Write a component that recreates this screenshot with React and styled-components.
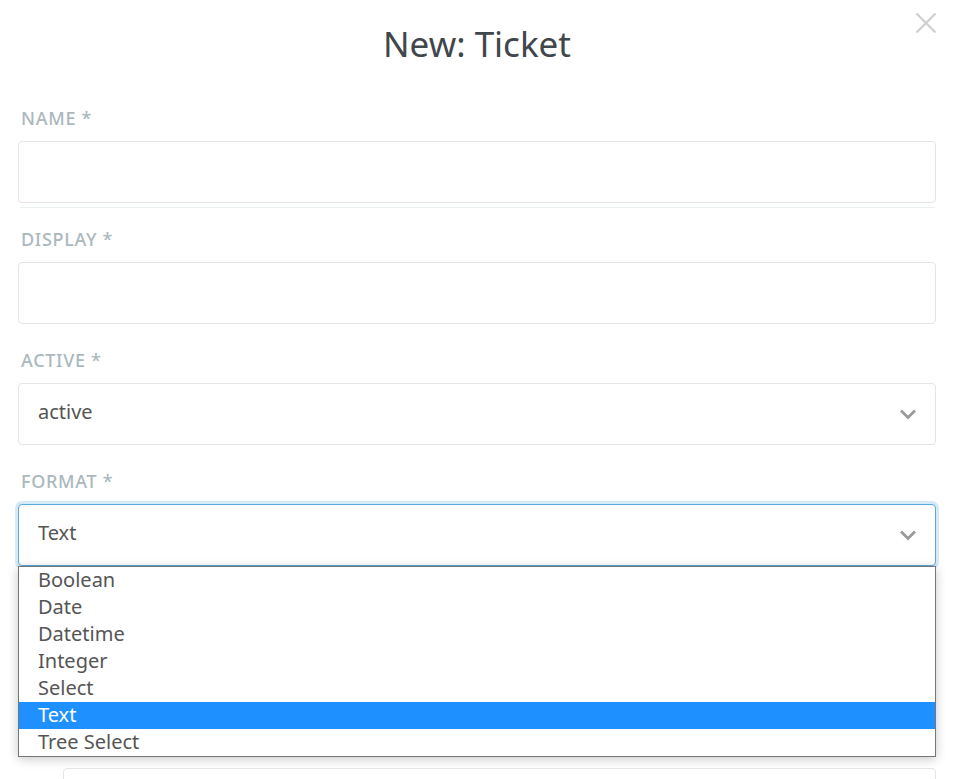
import React from "react";
import styled, { createGlobalStyle } from "styled-components";

const Global = createGlobalStyle`
  html, body { margin: 0; padding: 0; background: #fff; }
  body { font-family: "Noto Sans", "Open Sans", sans-serif; color: #585858; overflow: hidden; }
  * { box-sizing: border-box; }
`;

const Modal = styled.div`
  position: relative;
  width: 956px;
  height: 779px;
  overflow: hidden;
  padding: 0 20px 0 18px;
`;

const Header = styled.header`
  padding-top: 22px;
  text-align: center;
`;

const Title = styled.h1`
  margin: 0;
  font-size: 35px;
  line-height: 43px;
  font-weight: 400;
  color: #3f464c;
`;

const CloseButton = styled.button`
  position: absolute;
  top: 10px;
  right: 17px;
  width: 26px;
  height: 26px;
  padding: 0;
  border: 0;
  background: none;
  display: flex;
  align-items: center;
  justify-content: center;
`;

const Form = styled.form`
  margin-top: 41px;
  display: flex;
  flex-direction: column;
  gap: 24px;
`;

const Field = styled.div`
  display: flex;
  flex-direction: column;
`;

const Label = styled.label`
  display: block;
  padding-left: 3px;
  font-size: 18px;
  line-height: 24px;
  font-weight: 500;
  letter-spacing: 0.7px;
  text-transform: uppercase;
  color: #aab8be;
  margin-bottom: 11px;
`;

const Input = styled.div`
  height: 62px;
  border: 1px solid #e4e4e4;
  border-radius: 4px;
  background: #fff;
`;

const Divider = styled.div`
  height: 1px;
  margin: 4px 1px -5px 2px;
  background: #e9f0f0;
`;

const SelectWrap = styled.div`
  position: relative;
`;

const SelectBox = styled.div`
  height: 62px;
  display: flex;
  align-items: center;
  justify-content: space-between;
  padding: 0 18px 1px 19px;
  border: 1px solid ${(p) => (p.$focused ? "#5aa9df" : "#e4e4e4")};
  border-radius: 4px;
  background: #fff;
  font-size: 20px;
  color: #555;
  box-shadow: ${(p) => (p.$focused ? "0 0 0 3px rgba(120, 185, 230, 0.3)" : "none")};
`;

const SelectValue = styled.span`
  margin-bottom: 4px;
`;

const Chevron = () => (
  <svg width="18" height="12" viewBox="0 0 18 12" fill="none">
    <path d="M2 2.5 L9 9.5 L16 2.5" stroke="#9a9a9a" strokeWidth="2.8" />
  </svg>
);

const Listbox = styled.ul`
  position: absolute;
  z-index: 5;
  top: 100%;
  left: 0;
  right: 0;
  margin: 0;
  padding: 0;
  list-style: none;
  background: #fff;
  border: 1px solid #767676;
  box-shadow: 0 2px 10px rgba(0, 0, 0, 0.22);
`;

const Option = styled.li`
  height: 27px;
  line-height: 25px;
  padding: 0 0 2px 19px;
  font-size: 20px;
  color: ${(p) => (p.$selected ? "#fff" : "#555")};
  background: ${(p) => (p.$selected ? "#1e90ff" : "#fff")};
`;

const SubSection = styled.div`
  margin-top: 202px;
  margin-left: 45px;
`;

const options = ["Boolean", "Date", "Datetime", "Integer", "Select", "Text", "Tree Select"];

export default function App() {
  return (
    <>
      <Global />
      <Modal>
        <CloseButton aria-label="close">
          <svg width="22" height="22" viewBox="0 0 22 22">
            <path d="M1.5 1.5 L20.5 20.5 M20.5 1.5 L1.5 20.5" stroke="#cfcfcf" strokeWidth="2.2" />
          </svg>
        </CloseButton>
        <Header>
          <Title>New: Ticket</Title>
        </Header>
        <Form>
          <Field>
            <Label>Name *</Label>
            <Input />
            <Divider />
          </Field>
          <Field>
            <Label>Display *</Label>
            <Input />
          </Field>
          <Field>
            <Label>Active *</Label>
            <SelectWrap>
              <SelectBox>
                <SelectValue>active</SelectValue>
                <Chevron />
              </SelectBox>
            </SelectWrap>
          </Field>
          <Field>
            <Label>Format *</Label>
            <SelectWrap>
              <SelectBox $focused>
                <SelectValue>Text</SelectValue>
                <Chevron />
              </SelectBox>
              <Listbox>
                {options.map((o) => (
                  <Option key={o} $selected={o === "Text"}>
                    {o}
                  </Option>
                ))}
              </Listbox>
            </SelectWrap>
          </Field>
        </Form>
        <SubSection>
          <Input />
        </SubSection>
      </Modal>
    </>
  );
}
